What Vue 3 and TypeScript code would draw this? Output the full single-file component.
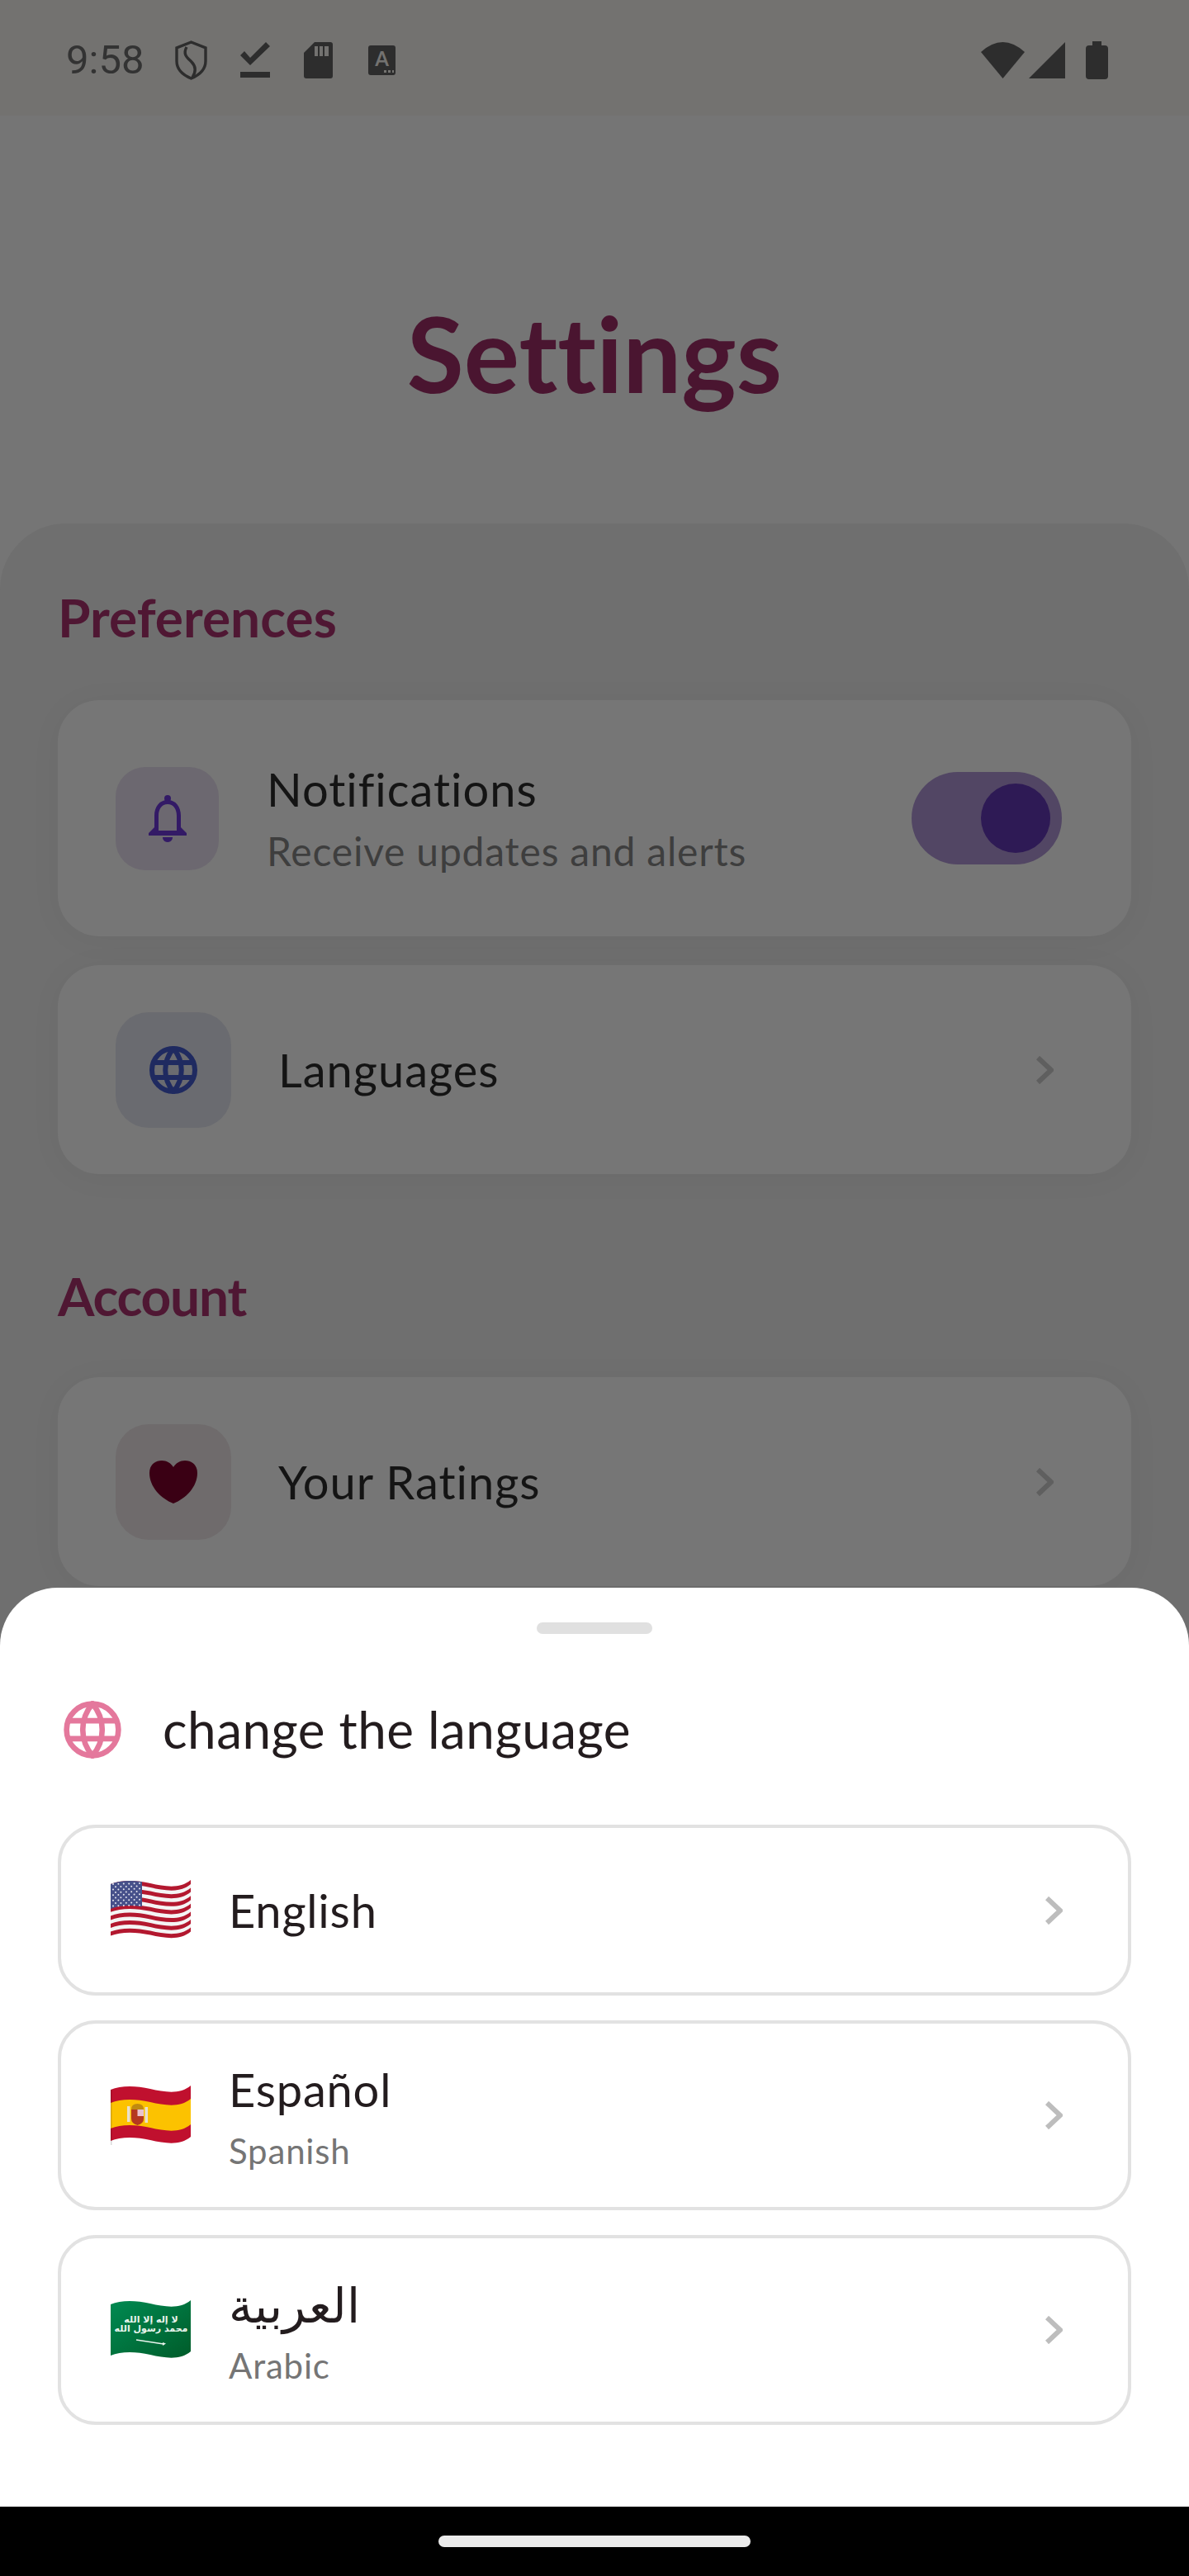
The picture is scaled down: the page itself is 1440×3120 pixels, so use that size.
<script setup lang="ts">
type Lang = { code: string; name: string; sub?: string };

const languages: Lang[] = [
  { code: "us", name: "English" },
  { code: "es", name: "Español", sub: "Spanish" },
  { code: "sa", name: "العربية", sub: "Arabic" },
];

// wavy edge of the flag emoji, offset down by y
function waveBand(y0: number, y1: number): string {
  const a = `M0 ${5 + y0}C12 ${y0} 30 ${y0} 48 ${y0 + 4}S84 ${y0 + 11} 97 ${y0}`;
  const b = `V${y1}C84 ${y1 + 11} 66 ${y1 + 8} 48 ${y1 + 4}S12 ${y1} 0 ${y1 + 5}Z`;
  return a + b;
}

const usStripes = Array.from({ length: 7 }, (_, i) => waveBand(i * 9.6, i * 9.6 + 5));
const usStars: { x: number; y: number }[] = [];
for (let r = 0; r < 9; r++) {
  for (let c = 0; c < (r % 2 ? 5 : 6); c++) {
    usStars.push({ x: (r % 2 ? 6 : 3) + c * 6.4, y: 5 + r * 3.3 - c * 0.2 });
  }
}
</script>

<template>
  <div class="screen">
    <div class="content">
      <div class="status-bar">
        <span class="time">9:58</span>
        <svg class="ic-shield" viewBox="0 0 39 48" fill="none" stroke="currentColor" stroke-width="3.4">
          <path d="M19.5 2 L37 9 V25 C37 35 29 42 19.5 46 C10 42 2 35 2 25 V9 Z" />
          <path d="M14 8 C9 17 15 21 20 26 C25 31 26 37 21 45" />
        </svg>
        <svg class="ic-check" viewBox="0 0 36 43" fill="currentColor">
          <path d="M0 16 L5 11 L12 19 L31 0 L36 5 L12 28 Z" />
          <rect x="0" y="36" width="36" height="7" />
        </svg>
        <svg class="ic-sd" viewBox="0 0 35 44" fill="currentColor">
          <path d="M13 0 H32 Q35 0 35 3 V41 Q35 44 32 44 H3 Q0 44 0 41 V13 Z" />
          <rect x="13" y="5" width="4" height="12" fill="#737270" />
          <rect x="19" y="5" width="4" height="12" fill="#737270" />
          <rect x="25" y="5" width="5" height="12" fill="#737270" />
        </svg>
        <span class="ic-a">A<i class="dots"></i></span>
        <span class="spacer"></span>
        <svg class="ic-wifi" viewBox="0 0 53 44" fill="currentColor">
          <path d="M0 12 Q26.5 -12 53 12 L26.5 44 Z" />
        </svg>
        <svg class="ic-signal" viewBox="0 0 44 44" fill="currentColor">
          <path d="M0 44 L44 0 V44 Z" />
        </svg>
        <svg class="ic-battery" viewBox="0 0 27 46" fill="currentColor">
          <path d="M8 0 H19 V5 H23 Q27 5 27 9 V42 Q27 46 23 46 H4 Q0 46 0 42 V9 Q0 5 4 5 H8 Z" />
        </svg>
      </div>

      <h1 class="title">Settings</h1>

      <div class="panel">
        <h2 class="section">Preferences</h2>
        <div class="card notif">
          <div class="tile tile-bell">
            <svg class="bell" viewBox="0 0 46 57" fill="#331a66">
              <circle cx="23" cy="4" r="4" />
              <path d="M23 6 C13 6 7 14 7 25 V39 L0 46 V49 H46 V46 L39 39 V25 C39 14 33 6 23 6 Z M23 11 C30 11 34 17 34 25 V43 H12 V25 C12 17 16 11 23 11 Z" fill-rule="evenodd" />
              <path d="M17 51 H29 C29 55 26 57 23 57 C20 57 17 55 17 51 Z" />
            </svg>
          </div>
          <div class="notif-text">
            <div class="label">Notifications</div>
            <div class="hint">Receive updates and alerts</div>
          </div>
          <div class="toggle"><div class="thumb"></div></div>
        </div>

        <div class="card link">
          <div class="tile tile-globe">
            <svg class="globe navy" viewBox="0 0 58 58" fill="none" stroke="currentColor" stroke-width="6">
              <circle cx="29" cy="29" r="26" />
              <path d="M29 3 C16 18 16 40 29 55 C42 40 42 18 29 3 Z" />
              <path d="M4 20 H54 M4 38 H54" />
            </svg>
          </div>
          <div class="label">Languages</div>
          <svg class="chev dim" viewBox="0 0 21 34" fill="none" stroke="currentColor" stroke-width="6">
            <path d="M2 2 L18 17 L2 32" />
          </svg>
        </div>

        <h2 class="section account">Account</h2>
        <div class="card link">
          <div class="tile tile-heart">
            <svg class="heart" viewBox="0 0 58 52" fill="#3a0014">
              <path d="M29 52 C14 46 0 32 0 15 C0 6 6 0 15 0 C21 0 26 3 29 8 C32 3 37 0 43 0 C52 0 58 6 58 15 C58 32 44 46 29 52 Z" />
            </svg>
          </div>
          <div class="label">Your Ratings</div>
          <svg class="chev dim" viewBox="0 0 21 34" fill="none" stroke="currentColor" stroke-width="6">
            <path d="M2 2 L18 17 L2 32" />
          </svg>
        </div>
      </div>

      <div class="sheet">
        <div class="handle"></div>
        <div class="sheet-head">
          <svg class="globe pink" viewBox="0 0 58 58" fill="none" stroke="currentColor" stroke-width="5.5">
            <circle cx="29" cy="29" r="26" />
            <path d="M29 3 C16 18 16 40 29 55 C42 40 42 18 29 3 Z" />
            <path d="M4 20 H54 M4 38 H54" />
          </svg>
          <span class="sheet-title">change the language</span>
        </div>

        <div class="lang-list">
          <div v-for="lang in languages" :key="lang.code" class="lang-row" :class="{ two: lang.sub }">
            <svg class="flag" viewBox="0 -1 97 75">
              <template v-if="lang.code === 'us'">
                <path :d="waveBand(0, 62)" fill="#f4f4f4" />
                <path v-for="d in usStripes" :key="d" :d="d" fill="#b3182f" />
                <clipPath id="canton"><rect x="0" y="-3" width="38" height="40" /></clipPath>
                <path :d="waveBand(0, 30)" fill="#46508a" clip-path="url(#canton)" />
                <circle v-for="s in usStars" :key="`${s.x}-${s.y}`" :cx="s.x" :cy="s.y" r="1" fill="#e8e8f0" />
              </template>
              <template v-else-if="lang.code === 'es'">
                <path :d="waveBand(0, 62)" fill="#c0102e" />
                <path :d="waveBand(16, 47)" fill="#fcc200" />
                <rect x="20" y="25" width="3.500" height="19" fill="#e8e0d0" />
                <rect x="41.500" y="26" width="3.500" height="19" fill="#e8e0d0" />
                <path d="M25 29 H40 V40 Q40 46 32.500 48 Q25 46 25 40 Z" fill="#b5381f" />
                <rect x="32.500" y="29" width="7.500" height="8" fill="#e9c3cf" />
                <path d="M25 29 Q25 22 32.500 22 Q40 22 40 29 Z" fill="#c08a10" />
                <rect x="0" y="5" width="1.500" height="67" fill="#000" opacity="0.15" />
              </template>
              <template v-else>
                <defs>
                  <linearGradient id="sa-green" x1="0" y1="0" x2="1" y2="1">
                    <stop offset="0" stop-color="#008a52" />
                    <stop offset="1" stop-color="#005c2a" />
                  </linearGradient>
                </defs>
                <path :d="waveBand(0, 62)" fill="url(#sa-green)" />
                <text x="49" y="27" class="flag-script" text-anchor="middle">لا إله إلا الله</text>
                <text x="49" y="38" class="flag-script" text-anchor="middle">محمد رسول الله</text>
                <path d="M31 48 L64 53" stroke="#eaf5ee" stroke-width="1.4" fill="none" />
                <path d="M63 51 L67 52.500 L63 55 Z" fill="#eaf5ee" />
              </template>
            </svg>
            <div class="lang-text">
              <div class="lang-name" :class="{ arabic: lang.code === 'sa' }">{{ lang.name }}</div>
              <div v-if="lang.sub" class="lang-sub">{{ lang.sub }}</div>
            </div>
            <svg class="chev light" viewBox="0 0 21 34" fill="none" stroke="currentColor" stroke-width="6">
              <path d="M2 2 L18 17 L2 32" />
            </svg>
          </div>
        </div>
      </div>
    </div>

    <div class="nav-bar"><div class="nav-pill"></div></div>
  </div>
</template>

<style scoped>
.screen {
  display: flex;
  flex-direction: column;
  width: 1440px;
  height: 3120px;
  font-family: "Lato", "Noto Sans", sans-serif;
  font-variant-ligatures: none;
  background: #757575;
  overflow: hidden;
}

.content {
  position: relative;
  flex: 1;
  overflow: hidden;
  display: flex;
  flex-direction: column;
}

.status-bar {
  display: flex;
  align-items: center;
  flex-shrink: 0;
  height: 140px;
  padding: 5px 98px 0 80px;
  box-sizing: border-box;
  background: #737270;
  color: #2d2d2d;
}

.time {
  width: 132px;
  font-family: "Roboto", sans-serif;
  font-size: 49px;
  color: #333;
}

.ic-shield {
  width: 39px;
  height: 48px;
  margin-right: 40px;
}

.ic-check {
  width: 36px;
  height: 43px;
  margin-right: 41px;
}

.ic-sd {
  width: 35px;
  height: 44px;
  margin-right: 43px;
}

.ic-a {
  position: relative;
  display: block;
  width: 33px;
  height: 36px;
  border-radius: 3px;
  background: #2d2d2d;
  color: #737270;
  font-size: 24px;
  font-weight: 700;
  line-height: 32px;
  text-align: center;
}

.dots {
  position: absolute;
  right: 2px;
  bottom: 3px;
  width: 12px;
  height: 3px;
  background: repeating-linear-gradient(90deg, #737270 0 3px, transparent 3px 5px);
}

.spacer {
  flex: 1;
}

.ic-wifi {
  width: 53px;
  height: 44px;
  margin-right: 5px;
}

.ic-signal {
  width: 44px;
  height: 44px;
  margin-right: 25px;
}

.ic-battery {
  width: 27px;
  height: 46px;
}

.title {
  margin: 220px 0 138px;
  height: 136px;
  font-size: 126px;
  line-height: 136px;
  font-weight: 700;
  text-align: center;
  color: #4a1530;
}

.panel {
  flex: 1;
  padding: 64px 70px 0;
  border-radius: 80px 80px 0 0;
  background: #6f6f6f;
}

.section {
  margin: 0 0 50px;
  height: 100px;
  font-size: 64px;
  line-height: 100px;
  font-weight: 700;
  color: #4f1733;
}

.section.account {
  margin: 98px 0 48px;
  letter-spacing: -1.2px;
}

.card {
  display: flex;
  align-items: center;
  box-sizing: border-box;
  padding: 0 70px;
  border-radius: 50px;
  background: #767676;
  box-shadow: 0 4px 40px rgba(0, 0, 0, 0.04);
}

.card.notif {
  height: 286px;
  margin-bottom: 35px;
}

.card.link {
  height: 253px;
}

.tile {
  display: flex;
  align-items: center;
  justify-content: center;
  flex-shrink: 0;
  width: 140px;
  height: 140px;
  border-radius: 40px;
  margin-right: 57px;
}

.tile-bell {
  width: 125px;
  height: 125px;
  margin-right: 58px;
  border-radius: 36px;
  background: #6c6870;
}

.tile-globe {
  background: #6a6b70;
}

.tile-heart {
  background: #6f6b6c;
}

.bell {
  width: 46px;
  height: 57px;
}

.heart {
  width: 58px;
  height: 52px;
}

.globe {
  width: 58px;
  height: 58px;
}

.navy {
  color: #1f2a60;
}

.pink {
  width: 70px;
  height: 70px;
  color: #e4789c;
}

.label {
  flex: 1;
  font-size: 56px;
  letter-spacing: 1px;
  line-height: 70px;
  color: #141414;
}

.notif-text {
  flex: 1;
  margin-top: 10px;
}

.hint {
  font-size: 48px;
  letter-spacing: 0.8px;
  line-height: 80px;
  color: #3e3e3e;
}

.toggle {
  display: flex;
  align-items: center;
  justify-content: flex-end;
  width: 182px;
  height: 112px;
  padding-right: 14px;
  box-sizing: border-box;
  border-radius: 56px;
  background: #524664;
  margin-right: 14px;
}

.thumb {
  width: 84px;
  height: 84px;
  border-radius: 50%;
  background: #2e1a55;
}

.chev {
  flex-shrink: 0;
  width: 21px;
  height: 34px;
}

.dim {
  color: #5f5f5f;
  margin-right: 24px;
}

.light {
  color: #bdbdbd;
  margin-right: 19px;
}

.sheet {
  position: absolute;
  left: 0;
  right: 0;
  bottom: 0;
  height: 1113px;
  padding: 42px 70px 0;
  box-sizing: border-box;
  border-radius: 70px 70px 0 0;
  background: #fff;
}

.handle {
  width: 140px;
  height: 14px;
  margin: 0 auto;
  border-radius: 7px;
  background: #e0e0e0;
}

.sheet-head {
  display: flex;
  align-items: center;
  height: 70px;
  margin: 81px 0 80px 7px;
}

.sheet-title {
  margin: -3px 0 0 50px;
  font-size: 62px;
  letter-spacing: 0.5px;
  line-height: 66px;
  color: #231c1e;
}

.lang-list {
  display: flex;
  flex-direction: column;
  gap: 30px;
}

.lang-row {
  display: flex;
  align-items: center;
  box-sizing: border-box;
  height: 207px;
  padding: 0 60px;
  border: 4px solid #e2e2e2;
  border-radius: 46px;
}

.lang-row.two {
  height: 230px;
}

.flag {
  flex-shrink: 0;
  width: 97px;
  height: 75px;
  margin-right: 46px;
}

.flag-script {
  font-family: "DejaVu Sans", sans-serif;
  font-size: 11px;
  font-weight: 700;
  fill: #eaf5ee;
}

.lang-text {
  flex: 1;
}

.lang-name {
  font-size: 56px;
  letter-spacing: 0.8px;
  line-height: 70px;
  color: #231c1e;
}

.lang-name.arabic {
  font-size: 58px;
  letter-spacing: 0;
}

.lang-row.two .lang-text {
  margin-top: 16px;
}

.lang-sub {
  font-size: 42px;
  letter-spacing: 0.8px;
  line-height: 78px;
  color: #757575;
}

.nav-bar {
  display: flex;
  justify-content: center;
  flex-shrink: 0;
  height: 84px;
  padding-top: 35px;
  box-sizing: border-box;
  background: #000;
}

.nav-pill {
  width: 378px;
  height: 14px;
  border-radius: 7px;
  background: #ebebeb;
}
</style>
